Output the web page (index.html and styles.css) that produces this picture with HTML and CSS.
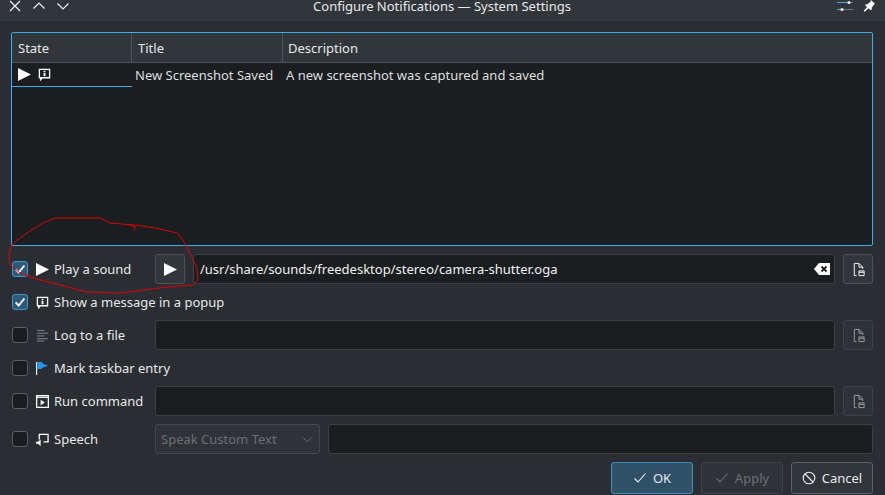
FILE: index.html
```html
<!DOCTYPE html>
<html lang="en">
<head>
<meta charset="utf-8">
<title>Configure Notifications — System Settings</title>
<link rel="stylesheet" href="styles.css">
</head>
<body>
<div class="window">
  <header class="titlebar">
    <div class="tb-left">
      <svg class="tb-ico" viewBox="0 0 14 14"><path d="M2 2l10 10M12 2L2 12"/></svg>
      <svg class="tb-ico" viewBox="0 0 14 14"><path d="M1.500 9.500L7 4l5.500 5.500"/></svg>
      <svg class="tb-ico" viewBox="0 0 14 14"><path d="M1.500 4.500L7 10l5.500-5.500"/></svg>
    </div>
    <div class="tb-title">Configure Notifications — System Settings</div>
    <div class="tb-right">
      <svg class="tb-sliders" viewBox="0 0 18 14"><path class="s-blue" d="M1 3.500h12"/><path class="s-grey" d="M13 3.500h4M6 10.500h11"/><path class="s-blue" d="M1 10.500h5"/><circle class="s-knob" cx="13" cy="3.500" r="1.600"/><circle class="s-knob" cx="6" cy="10.500" r="1.600"/></svg>
      <svg class="tb-pin" viewBox="0 0 14 14"><path d="M8.500 1l4.500 4.500-1.300.5-2.200 3.300-.3 2.200-1 .5-2.100-2.100L2 13.400l-1 .1-.1-1 3.400-3.600-2-2.100.5-1 2.200-.3L8 3.200z"/></svg>
    </div>
  </header>
  <main class="content">
    <section class="table">
      <div class="thead">
        <div class="th th-state">State</div>
        <div class="th th-title">Title</div>
        <div class="th th-desc">Description</div>
      </div>
      <div class="tr">
        <div class="td td-state">
          <svg class="i14" viewBox="0 0 14 14"><path class="fill" d="M0 0l14 7-14 7z"/></svg>
          <svg class="i14" viewBox="0 0 14 14"><path class="line" d="M1.500 1.500h11v9H4.500l-1.500 2v-2H1.500z"/><path class="fill" d="M6 3h2v1.700H6zM6 5.500h2v3.500H6z"/></svg>
        </div>
        <div class="td td-title">New Screenshot Saved</div>
        <div class="td td-desc">A new screenshot was captured and saved</div>
      </div>
    </section>

    <section class="form">
      <label class="opt"><span class="check on"><svg viewBox="0 0 16 16"><path d="M3 8.500l3.500 3.500 6.500-8"/></svg></span><svg class="i14" viewBox="0 0 14 14"><path class="fill" d="M0 0l14 7-14 7z"/></svg><span>Play a sound</span></label>
      <div class="field-group">
        <button class="btn-square play" type="button"><svg class="i14" viewBox="0 0 14 14"><path class="fill" d="M0 0l14 7-14 7z"/></svg></button>
        <div class="input filled"><span>/usr/share/sounds/freedesktop/stereo/camera-shutter.oga</span>
          <svg class="clear" viewBox="0 0 16 12"><path class="fill" d="M5 0h11v12H5L0 6z"/><path class="x" d="M7.500 3.500l5 5M12.500 3.500l-5 5"/></svg>
        </div>
      </div>
      <button class="btn-square" type="button"><svg class="file" viewBox="0 0 16 16"><path d="M6 14.500H3.500v-13h5l4 4v2M8.500 1.500v4h4"/><path d="M8.500 9.500h5.500v5H8.500zM8.500 11h5.500"/></svg></button>

      <label class="opt opt-full"><span class="check on"><svg viewBox="0 0 16 16"><path d="M3 8.500l3.500 3.500 6.500-8"/></svg></span><svg class="i14" viewBox="0 0 14 14"><path class="line" d="M1.500 1.500h11v9H4.500l-1.500 2v-2H1.500z"/><path class="fill" d="M6 3h2v1.700H6zM6 5.500h2v3.500H6z"/></svg><span>Show a message in a popup</span></label>

      <label class="opt"><span class="check"></span><svg class="i14" viewBox="0 0 14 14"><path class="log" d="M1 1.500h8M1 4.500h12M1 7.500h8M1 10.500h12M1 13h8"/></svg><span>Log to a file</span></label>
      <div class="input"></div>
      <button class="btn-square off" type="button"><svg class="file" viewBox="0 0 16 16"><path d="M6 14.500H3.500v-13h5l4 4v2M8.500 1.500v4h4"/><path d="M8.500 9.500h5.500v5H8.500zM8.500 11h5.500"/></svg></button>

      <label class="opt opt-full"><span class="check"></span><svg class="i14" viewBox="0 0 14 14"><path class="pole" d="M.7 0v14"/><path class="flag" d="M1.500 0h5l1 2 5.500 2-5.500 2-2 1.500h-4z"/></svg><span>Mark taskbar entry</span></label>

      <label class="opt"><span class="check"></span><svg class="i14" viewBox="0 0 14 14"><path class="frame" d="M.7.700h12.600v12.600H.7z"/><path class="frame" d="M.7 2.500h12.600"/><path class="fill" d="M5 5l4.500 3L5 11z"/></svg><span>Run command</span></label>
      <div class="input"></div>
      <button class="btn-square off" type="button"><svg class="file" viewBox="0 0 16 16"><path d="M6 14.500H3.500v-13h5l4 4v2M8.500 1.500v4h4"/><path d="M8.500 9.500h5.500v5H8.500zM8.500 11h5.500"/></svg></button>

      <label class="opt speech"><span class="check"></span><svg class="i14" viewBox="0 0 14 14"><path class="line" d="M3.500 7V1.500h9.500v8H8"/><path class="fill" d="M0 9.500h2L5 7v7l-3-2.500H0z"/></svg><span>Speech</span></label>
      <div class="speech-fields">
        <div class="combo"><span>Speak Custom Text</span><svg viewBox="0 0 12 8"><path d="M1 1.500L6 6.500l5-5"/></svg></div>
        <div class="input"></div>
      </div>
    </section>

    <footer class="actions">
      <button class="btn ok" type="button"><svg viewBox="0 0 14 14"><path d="M1.500 7.500l3.500 3.500 7.500-8.500"/></svg>OK</button>
      <button class="btn apply" type="button"><svg viewBox="0 0 14 14"><path d="M1.500 7.500l3.500 3.500 7.500-8.500"/></svg>Apply</button>
      <button class="btn" type="button"><svg viewBox="0 0 14 14"><circle cx="7" cy="7" r="5.800"/><path d="M3 3l8 8"/></svg>Cancel</button>
    </footer>
  </main>
  <svg class="scribble" viewBox="0 0 885 495"><path d="M12 245L9 253L10 265L20 273L37 279L60 285L87 292L120 293L143 290L167 287L193 285L198 280L197 268L190 253L183 240L177 233L160 229L143 226L133 225L110 223L100 218L55 218L43 223L27 233L17 240Z M128 224L135 227L134 231"/></svg>
</div>
</body>
</html>
```
FILE: styles.css
```css
* { box-sizing: border-box; }
html, body { margin: 0; padding: 0; }
body {
  width: 885px;
  height: 495px;
  overflow: hidden;
  background: #2a2e32;
  color: #eff0f1;
  font-family: "Noto Sans", sans-serif;
  font-size: 13px;
  line-height: 18px;
}
.window { position: relative; width: 885px; height: 495px; display: flex; flex-direction: column; }
.titlebar {
  height: 21px;
  flex: none;
  background: #31363b;
  display: flex;
  justify-content: space-between;
  padding: 0 9px 0 8px;
}
.tb-left { display: flex; gap: 10px; height: 13px; align-items: center; margin-top: -1px; }
.tb-ico { width: 14px; height: 14px; fill: none; stroke: #eff0f1; stroke-width: 1.2; }
.tb-title { flex: 1; text-align: center; padding-right: 22px; color: #e6e8e9; margin-top: -3px; height: 18px; }
.tb-right { display: flex; gap: 9px; align-items: flex-start; margin-top: -1px; }
.tb-sliders { width: 18px; height: 14px; fill: none; stroke-width: 1; }
.s-blue { stroke: #3daee9; }
.s-grey { stroke: #6e7377; }
.s-knob { fill: #eff0f1; stroke: none; }
.tb-pin { width: 13px; height: 13px; fill: #fcfcfc; }
.content { flex: 1; display: flex; flex-direction: column; padding: 11px 12px 1px 11px; min-height: 0; }
.table {
  height: 214px;
  flex: none;
  border: 1px solid #3daee9;
  border-radius: 2px;
  background: #1b1e20;
}
.thead { display: flex; height: 30px; background: #31363b; border-bottom: 1px solid #4d5257; }
.th { padding: 0 5px; display: flex; align-items: center; border-right: 1px solid #4d5257; color: #e6e8e9; }
.th-state { width: 120px; padding-left: 6px; }
.th-title { width: 151px; padding-left: 6px; }
.th-desc { flex: 1; border-right: 0; }
.tr { display: flex; height: 24px; color: #dcdedf; }
.td { display: flex; align-items: center; }
.td-state { width: 120px; gap: 7px; padding: 0 0 1px 6px; border-bottom: 1px solid #3daee9; }
.td-title { width: 151px; padding: 0 0 0 3px; }
.td-desc { padding: 0 0 0 3px; }
.i14 { width: 13px; height: 13px; flex: none; }
.fill { fill: #fcfcfc; stroke: none; }
.line { fill: none; stroke: #fcfcfc; stroke-width: 1.4; }
.frame { fill: none; stroke: #fcfcfc; stroke-width: 1.4; }
.log { fill: none; stroke: #7f8c8d; stroke-width: 1; }
.pole { stroke: #fcfcfc; stroke-width: 1.2; fill: none; }
.flag { fill: #2196f3; }
.form {
  display: grid;
  grid-template-columns: 135px 1fr 30px;
  column-gap: 8px;
  grid-template-rows: 30px 24px 30px 24px 30px 32px;
  row-gap: 6px;
  margin: 8px 0 0 1px;
  flex: none;
}
.opt { display: flex; align-items: center; color: #e6e8e9; white-space: nowrap; }
.opt-full { grid-column: 1 / -1; }
.opt .i14 { margin: 0 5px 0 8px; }
.check {
  width: 16px; height: 16px; flex: none;
  border: 1px solid #5a5e62;
  border-radius: 3px;
  background: #1b1e20;
  display: block;
}
.check svg { display: block; width: 14px; height: 14px; fill: none; stroke: #fcfcfc; stroke-width: 2.2; }
.check.on { background: #2e5a78; border-color: #3d97cf; }
.field-group { display: flex; gap: 8px; min-width: 0; }
.btn-square {
  width: 30px; height: 30px; padding: 0;
  background: #31363b;
  border: 1px solid #4d5257;
  border-radius: 3px;
  display: flex; align-items: center; justify-content: center;
  flex: none;
}
.btn-square.off { opacity: .55; }
.file { width: 15px; height: 15px; fill: none; stroke: #fcfcfc; stroke-width: 1; }
.input {
  flex: 1;
  height: 30px;
  background: #1b1e20;
  border: 1px solid #3b4045;
  border-radius: 3px;
  min-width: 0;
}
.input.filled { display: flex; align-items: center; justify-content: space-between; padding: 0 4px 0 6px; color: #eff0f1; }
.clear { width: 16px; height: 12px; }
.x { stroke: #1b1e20; stroke-width: 1.8; fill: none; }
.speech { margin-top: 2px; }
.speech-fields { grid-column: 2 / 4; display: flex; gap: 8px; margin-top: 2px; height: 30px; }
.combo {
  width: 165px; height: 30px; flex: none;
  border: 1px solid #43484c;
  border-radius: 3px;
  background: #2f3337;
  color: #6c7074;
  display: flex; align-items: center; justify-content: space-between;
  padding: 0 6px 0 5px;
}
.combo svg { width: 11px; height: 7px; fill: none; stroke: #6c7074; stroke-width: 1; }
.actions { display: flex; justify-content: flex-end; gap: 8px; margin-top: 8px; }
.btn {
  width: 82px; height: 32px;
  padding: 0;
  font: inherit;
  color: #e6e8e9;
  background: #31363b;
  border: 1px solid #5d6266;
  border-radius: 3px;
  display: flex; align-items: center; justify-content: center; gap: 6px;
}
.btn svg { width: 14px; height: 14px; fill: none; stroke: #eff0f1; stroke-width: 1.1; }
.btn.ok { background: #2e5168; border-color: #3d8fbf; }
.btn.apply { color: #6c7074; background: #2f3337; border-color: #3f4347; }
.btn.apply svg { stroke: #6c7074; }
.scribble { position: absolute; left: 0; top: 0; width: 885px; height: 495px; fill: none; stroke: #e00000; stroke-width: 1; pointer-events: none; }
```
